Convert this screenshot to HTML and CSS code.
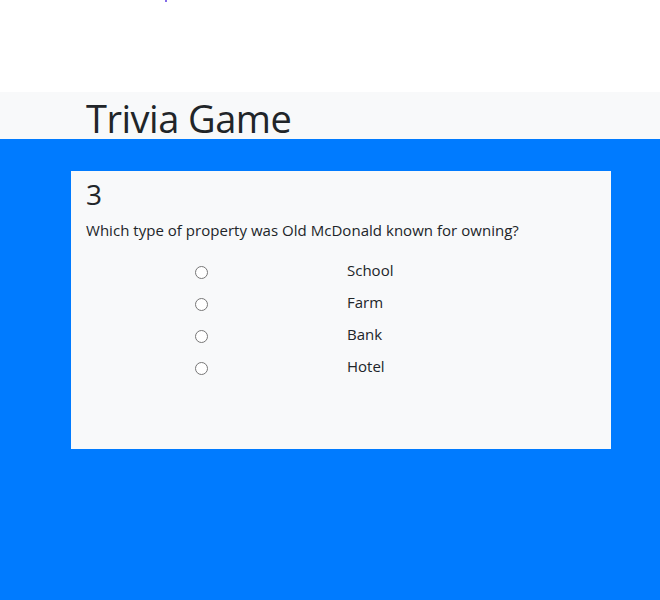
FILE: index.html
```html
<!DOCTYPE html>
<html>
<head>
<meta charset="utf-8">
<link rel="stylesheet" href="styles.css">
</head>
<body>
<span class="dot"></span>
<div class="top"></div>
<header class="band">
  <h1 class="title">Trivia Game</h1>
</header>
<main class="stage">
  <section class="card">
    <div class="num">3</div>
    <p class="question">Which type of property was Old McDonald known for owning?</p>
    <div class="answers">
      <label class="answer"><span class="radio-cell"><input type="radio" name="a"></span><span class="answer-text">School</span></label>
      <label class="answer"><span class="radio-cell"><input type="radio" name="a"></span><span class="answer-text">Farm</span></label>
      <label class="answer"><span class="radio-cell"><input type="radio" name="a"></span><span class="answer-text">Bank</span></label>
      <label class="answer"><span class="radio-cell"><input type="radio" name="a"></span><span class="answer-text">Hotel</span></label>
    </div>
  </section>
</main>
</body>
</html>
```

FILE: styles.css
```css
html, body {
  margin: 0;
  padding: 0;
}
body {
  font-family: "Open Sans", "Noto Sans", sans-serif;
  color: #212529;
  background: #007bff;
  min-height: 600px;
  position: relative;
}
.dot {
  position: absolute;
  left: 165px;
  top: 0;
  width: 2px;
  height: 2px;
  background: #5a3be0;
  border-radius: 1px;
}
.top {
  height: 92px;
  background: #ffffff;
}
.band {
  height: 44px;
  padding-top: 3px;
  background: #f8f9fa;
  padding-left: 86px;
}
.title {
  margin: 0;
  font-size: 38px;
  font-weight: 400;
  line-height: 47px;
  letter-spacing: -0.5px;
}
.stage {
  background: #007bff;
  padding-top: 32px;
  padding-bottom: 151px;
}
.card {
  margin-left: 71px;
  width: 540px;
  height: 278px;
  box-sizing: border-box;
  background: #f8f9fa;
  padding: 4px 16px 16px 15px;
}
.num {
  font-size: 28px;
  line-height: 38px;
  font-weight: 400;
}
.question {
  margin: 5px 0 12px 0;
  font-size: 15px;
  line-height: 24px;
  letter-spacing: 0.03px;
}
.answers {
  display: flex;
  flex-direction: column;
}
.answer {
  display: flex;
  align-items: center;
  height: 32px;
  font-size: 15px;
}
.radio-cell {
  width: 230px;
  display: flex;
  justify-content: center;
}
.radio-cell input {
  margin: 4px 0 0 0;
  width: 13px;
  height: 13px;
}
.answer-text {
  margin-left: 31px;
  line-height: 20px;
  margin-bottom: 0;
}
```
